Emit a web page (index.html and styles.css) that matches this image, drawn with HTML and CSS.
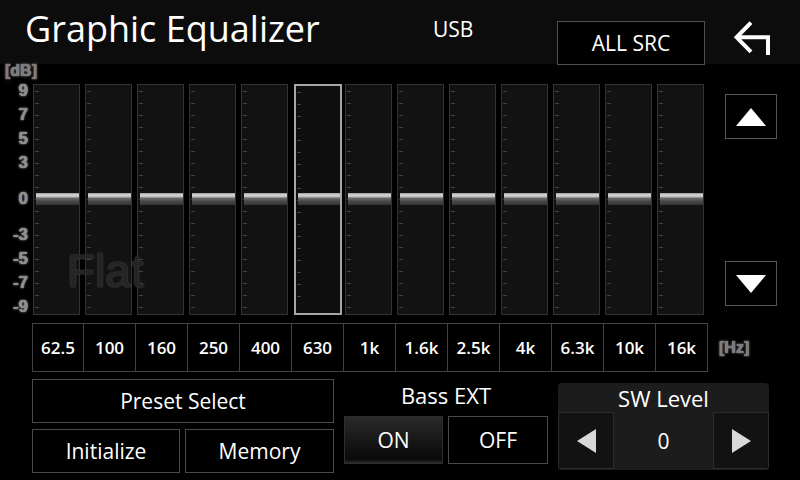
FILE: index.html
```html
<!DOCTYPE html>
<html lang="en">

<head>
    <meta charset="UTF-8">
    <title>Graphic Equalizer</title>
    <link rel="stylesheet" href="styles.css">
</head>

<body>
    <header class="topbar">
        <h1 class="title">Graphic Equalizer</h1>
        <div class="source">USB</div>
        <button class="btn allsrc">ALL SRC</button>
        <button class="back">
            <svg width="40" height="40" viewBox="0 0 40 40">
                <path d="M19 4.7 L4.6 19.3 L19 33.8 M5 19.3 H36 V37" fill="none" stroke="#fff" stroke-width="4" />
            </svg>
        </button>
    </header>

    <section class="eq">
        <div class="scale">
            <span class="unit db">[dB]</span>
            <span class="mark" style="top: -2px">9</span>
            <span class="mark" style="top: 22px">7</span>
            <span class="mark" style="top: 46px">5</span>
            <span class="mark" style="top: 70px">3</span>
            <span class="mark" style="top: 106px">0</span>
            <span class="mark" style="top: 142px">-3</span>
            <span class="mark" style="top: 166px">-5</span>
            <span class="mark" style="top: 190px">-7</span>
            <span class="mark" style="top: 214px">-9</span>
        </div>

        <div class="bands">
            <div class="band"><div class="thumb"></div></div>
            <div class="band"><div class="thumb"></div></div>
            <div class="band"><div class="thumb"></div></div>
            <div class="band"><div class="thumb"></div></div>
            <div class="band"><div class="thumb"></div></div>
            <div class="band selected"><div class="thumb"></div></div>
            <div class="band"><div class="thumb"></div></div>
            <div class="band"><div class="thumb"></div></div>
            <div class="band"><div class="thumb"></div></div>
            <div class="band"><div class="thumb"></div></div>
            <div class="band"><div class="thumb"></div></div>
            <div class="band"><div class="thumb"></div></div>
            <div class="band"><div class="thumb"></div></div>
            <div class="preset-name">Flat</div>
        </div>

        <div class="arrows">
            <button class="btn arrow"><span class="tri-up"></span></button>
            <button class="btn arrow"><span class="tri-down"></span></button>
        </div>
    </section>

    <div class="freqs">
        <div class="freq">62.5</div>
        <div class="freq">100</div>
        <div class="freq">160</div>
        <div class="freq">250</div>
        <div class="freq">400</div>
        <div class="freq">630</div>
        <div class="freq">1k</div>
        <div class="freq">1.6k</div>
        <div class="freq">2.5k</div>
        <div class="freq">4k</div>
        <div class="freq">6.3k</div>
        <div class="freq">10k</div>
        <div class="freq">16k</div>
        <span class="unit hz">[Hz]</span>
    </div>

    <section class="controls">
        <div class="preset">
            <button class="btn wide">Preset Select</button>
            <button class="btn">Initialize</button>
            <button class="btn">Memory</button>
        </div>

        <div class="bass">
            <div class="label">Bass EXT</div>
            <div class="pair">
                <button class="btn on">ON</button>
                <button class="btn">OFF</button>
            </div>
        </div>

        <div class="sw">
            <div class="label">SW Level</div>
            <div class="stepper">
                <button class="step"><span class="tri-left"></span></button>
                <div class="value">0</div>
                <button class="step"><span class="tri-right"></span></button>
            </div>
        </div>
    </section>
</body>

</html>
```

FILE: styles.css
```css
body {
    margin: 0;
    width: 800px;
    height: 480px;
    overflow: hidden;
    background-color: #000;
    color: #fff;
    font-family: "Open Sans", "DejaVu Sans", sans-serif;
}

button {
    font-family: inherit;
    color: inherit;
    padding: 0;
    cursor: pointer;
}

.btn {
    background-color: #000;
    border: 1px solid #4a4a4a;
    font-size: 21px;
    display: flex;
    align-items: center;
    justify-content: center;
    box-sizing: border-box;
}

/* header */

.topbar {
    height: 64px;
    background-color: #0c0c0c;
    display: flex;
    align-items: flex-start;
}

.title {
    margin: 11px 0 0 0;
    padding-left: 25px;
    width: 408px;
    box-sizing: border-box;
    font-size: 36px;
    font-weight: normal;
    line-height: 36px;
}

.source {
    margin-top: 19px;
    padding-left: 25px;
    width: 149px;
    box-sizing: border-box;
    font-size: 21px;
    line-height: 21px;
}

.allsrc {
    margin-top: 21px;
    width: 148px;
    height: 44px;
    border-color: #505050;
}

.back {
    margin: 18px 0 0 27px;
    width: 40px;
    height: 40px;
    background: none;
    border: none;
}

/* equalizer */

.eq {
    display: flex;
    padding-top: 20px;
}

.scale {
    position: relative;
    width: 32px;
    height: 231px;
}

.mark {
    position: absolute;
    right: 4px;
    line-height: 18px;
    font-family: "Liberation Sans", Arial, sans-serif;
    font-size: 17px;
    font-weight: bold;
    color: #8c8c8c;
    text-shadow: 0 0 1px #d8d8d8, 0 0 3px #666;
}

.unit {
    font-family: "Liberation Sans", Arial, sans-serif;
    font-size: 16px;
    font-weight: bold;
    color: #7a7a7a;
    text-shadow: 0 0 1px #c8c8c8, 0 0 3px #666;
}

.db {
    position: absolute;
    left: 5px;
    top: -22px;
}

.bands {
    position: relative;
    display: grid;
    grid-template-columns: repeat(13, 52px);
    height: 231px;
}

.band {
    position: relative;
    margin-left: 1px;
    width: 47px;
    height: 231px;
    box-sizing: border-box;
    border: 1px solid #333;
    background-color: #121212;
}

.band::before {
    content: "";
    position: absolute;
    left: 1px;
    top: 6px;
    bottom: 6px;
    width: 4px;
    background: repeating-linear-gradient(to bottom, #404040 0 1px, transparent 1px 12px);
}

.band.selected {
    margin-left: 2px;
    width: 48px;
    border: 2px solid #a6a6a6;
    background-color: #0e0e0e;
}

.thumb {
    position: absolute;
    left: 2px;
    right: 0;
    top: 108px;
    height: 12px;
    background: linear-gradient(to bottom, #9a9a9a 0, #d8d8d8 2px, #b8b8b8 4px, #6e6e6e 5px, #4a4a4a 8px, #333 12px);
}

.band.selected .thumb {
    top: 107px;
}

.preset-name {
    position: absolute;
    left: 35px;
    top: 160px;
    font-family: "Liberation Sans", Arial, sans-serif;
    font-size: 46px;
    color: #242424;
    text-shadow: 0 0 2px #5a5a5a;
}

.arrows {
    margin-left: 17px;
    padding: 10px 0 9px;
    display: flex;
    flex-direction: column;
    justify-content: space-between;
}

.arrow {
    width: 52px;
    height: 45px;
    border-color: #555;
}

.tri-up {
    border-left: 15px solid transparent;
    border-right: 15px solid transparent;
    border-bottom: 18px solid #fff;
}

.tri-down {
    border-left: 15px solid transparent;
    border-right: 15px solid transparent;
    border-top: 18px solid #fff;
}

/* frequency row */

.freqs {
    display: grid;
    grid-template-columns: repeat(13, 52px) auto;
    align-items: center;
    margin: 8px 0 0 32px;
}

.freq {
    height: 49px;
    box-sizing: border-box;
    border: 1px solid #444;
    border-left: none;
    display: flex;
    align-items: center;
    justify-content: center;
    font-size: 17px;
    font-weight: 600;
}

.freq:first-child {
    border-left: 1px solid #444;
}

.hz {
    margin-left: 11px;
}

/* bottom controls */

.controls {
    display: flex;
    align-items: flex-start;
    margin-top: 7px;
    padding-left: 32px;
}

.preset {
    display: grid;
    grid-template-columns: 148px 149px;
    column-gap: 5px;
    row-gap: 6px;
    width: 302px;
}

.preset .btn {
    height: 44px;
}

.preset .wide {
    grid-column: 1 / 3;
}

.bass {
    margin-left: 10px;
    width: 204px;
}

.label {
    font-size: 22px;
    text-align: center;
}

.bass .label {
    height: 37px;
    line-height: 32px;
}

.pair {
    display: grid;
    grid-template-columns: 99px 100px;
    column-gap: 5px;
}

.pair .btn {
    height: 48px;
}

.on {
    border-color: #2e2e2e;
    background: linear-gradient(to bottom, #2a2a2a, #121212 65%, #0a0a0a 92%, #2a2a2a);
}

.sw {
    margin: 4px 0 0 10px;
    width: 211px;
    height: 87px;
    background-color: #1c1c1c;
    border-radius: 4px;
    overflow: hidden;
}

.sw .label {
    height: 29px;
    line-height: 30px;
}

.stepper {
    display: flex;
    height: 57px;
}

.step {
    width: 56px;
    height: 57px;
    background-color: #121212;
    border: 1px solid #2c2c2c;
    display: flex;
    align-items: center;
    justify-content: center;
}

.value {
    flex: 1;
    display: flex;
    align-items: center;
    justify-content: center;
    font-size: 21px;
}

.tri-left {
    border-top: 12px solid transparent;
    border-bottom: 12px solid transparent;
    border-right: 19px solid #d8d8d8;
}

.tri-right {
    border-top: 12px solid transparent;
    border-bottom: 12px solid transparent;
    border-left: 19px solid #d8d8d8;
}
```
